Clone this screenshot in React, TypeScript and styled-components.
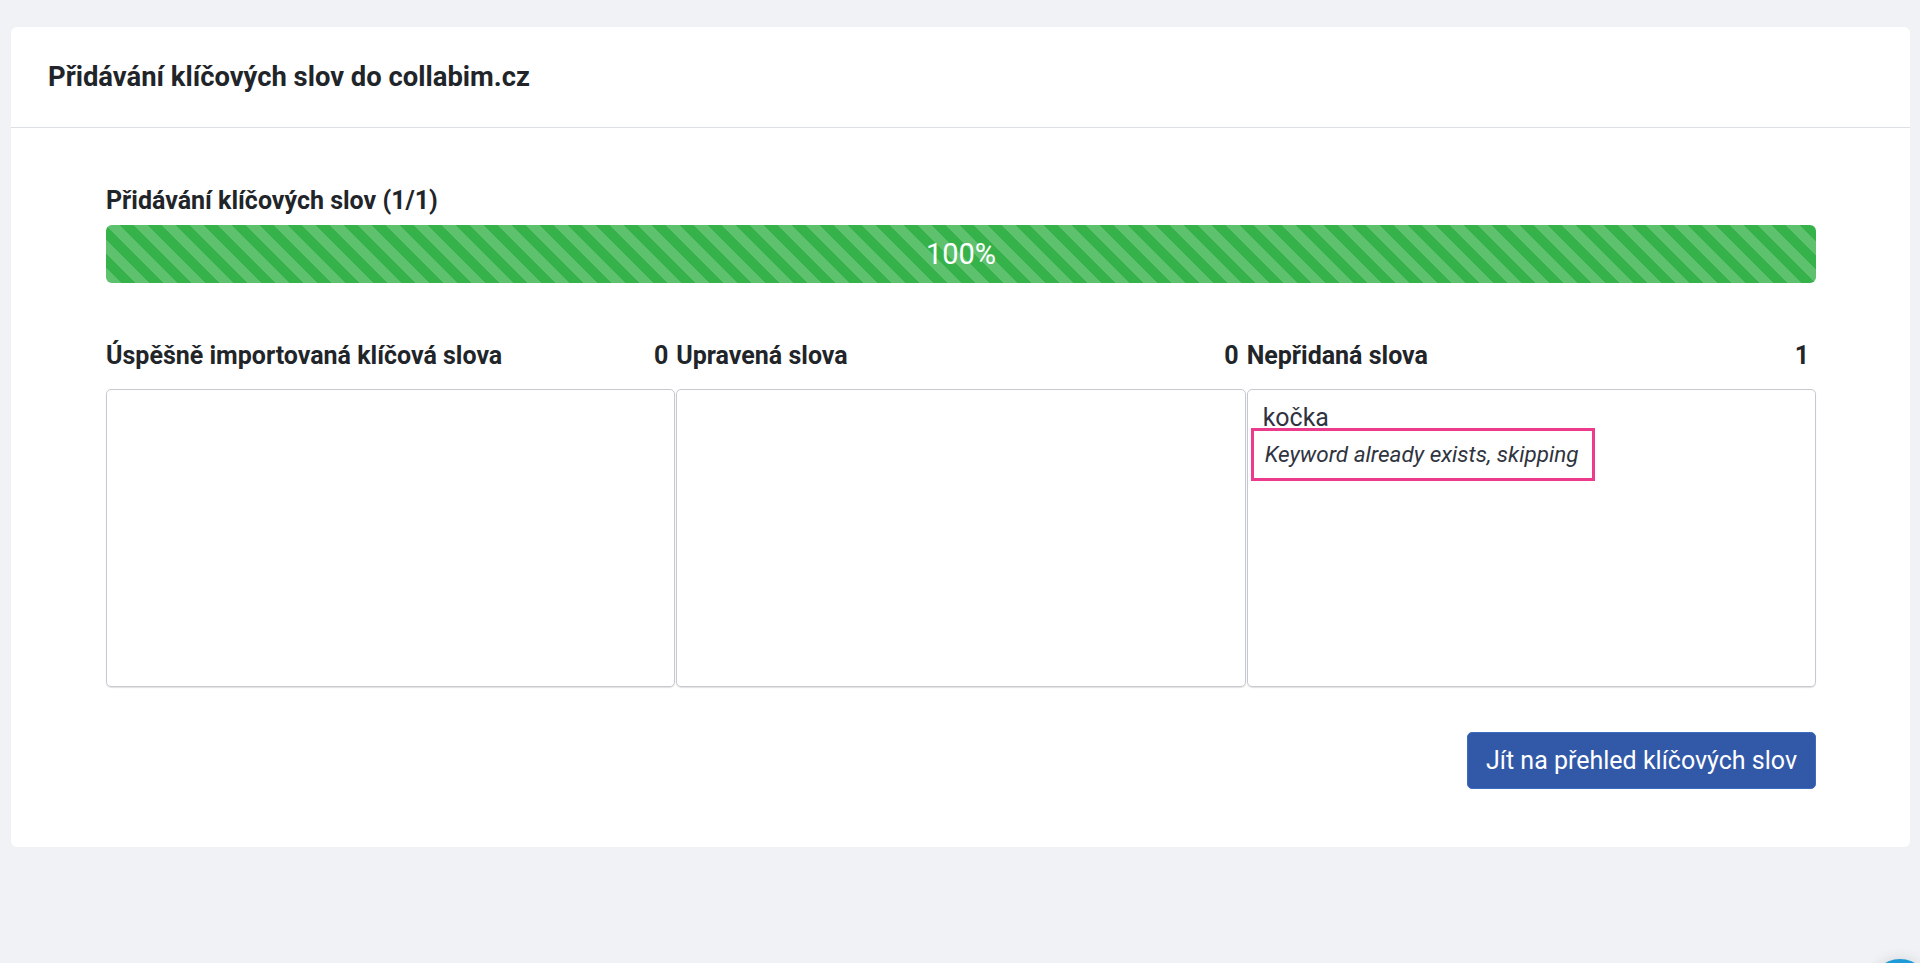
import React from "react";
import styled, { createGlobalStyle } from "styled-components";

const GlobalStyle = createGlobalStyle`
  html, body {
    margin: 0;
    padding: 0;
    background: #f0f2f6;
    font-family: Roboto, "Liberation Sans", Arial, sans-serif;
    color: #212529;
  }
  * { box-sizing: border-box; }
`;

const Page = styled.div`
  padding: 27px 10px 0 11px;
  min-height: 963px;
`;

const Card = styled.section`
  background: #ffffff;
  border-radius: 6px;
`;

const CardHeader = styled.header`
  height: 101px;
  display: flex;
  align-items: center;
  padding-left: 37px;
  border-bottom: 1px solid #dcdfe3;
`;

const Title = styled.h1`
  margin: 0;
  font-size: 27.4px;
  font-weight: 700;
  color: #212529;
`;

const CardBody = styled.div`
  padding: 58px 94px 58px 95px;
  display: flex;
  flex-direction: column;
`;

const ProgressLabel = styled.div`
  font-size: 25px;
  line-height: 30px;
  font-weight: 700;
  margin-bottom: 9px;
`;

const ProgressTrack = styled.div`
  height: 58px;
  border-radius: 6px;
  overflow: hidden;
  background: #e9ecef;
`;

const ProgressFill = styled.div`
  height: 100%;
  display: flex;
  align-items: center;
  justify-content: center;
  color: #ffffff;
  font-size: 29px;
  background-color: #36b24a;
  background-image: linear-gradient(
    45deg,
    rgba(255, 255, 255, 0.2) 25%,
    transparent 25%,
    transparent 50%,
    rgba(255, 255, 255, 0.2) 50%,
    rgba(255, 255, 255, 0.2) 75%,
    transparent 75%,
    transparent
  );
  background-size: 28px 28px;
`;

const Columns = styled.div`
  display: grid;
  grid-template-columns: repeat(3, 1fr);
  column-gap: 1px;
  margin-top: 58px;
`;

const Column = styled.div`
  display: flex;
  flex-direction: column;
  gap: 18px;
`;

const ColumnHead = styled.div`
  display: flex;
  justify-content: space-between;
  align-items: center;
  padding-right: 7px;
  font-size: 25px;
  line-height: 30px;
  font-weight: 700;
`;

const ListBox = styled.div`
  height: 298px;
  border: 1px solid #c6cacf;
  border-radius: 5px;
  box-shadow: 0 1px 1px rgba(0, 0, 0, 0.12);
  padding: 13px 15px;
  display: flex;
  flex-direction: column;
  align-items: flex-start;
`;

const Keyword = styled.div`
  font-size: 25px;
  line-height: 30px;
  color: #2f3440;
`;

const Reason = styled.div`
  margin: -5px 0 0 -12px;
  padding: 10px 13px 10px 11px;
  border: 3px solid #ec3b8d;
  font-size: 22.5px;
  line-height: 27px;
  font-style: italic;
  color: #2f3440;
`;

const Actions = styled.div`
  display: flex;
  justify-content: flex-end;
  margin-top: 45px;
`;

const PrimaryButton = styled.button`
  height: 57px;
  padding: 0 18px;
  border: 1px solid #3d6bc0;
  border-radius: 5px;
  background: #3259a8;
  color: #ffffff;
  font-family: Roboto, "Liberation Sans", Arial, sans-serif;
  font-size: 25px;
  cursor: pointer;
`;

const ChatBubble = styled.div`
  position: fixed;
  right: -10px;
  bottom: -56px;
  width: 60px;
  height: 60px;
  border-radius: 50%;
  background: #1e9bd7;
  box-shadow: 0 0 14px rgba(0, 0, 0, 0.12);
`;

type Col = { title: string; count: number; items: { word: string; reason?: string }[] };

const columns: Col[] = [
  { title: "Úspěšně importovaná klíčová slova", count: 0, items: [] },
  { title: "Upravená slova", count: 0, items: [] },
  {
    title: "Nepřidaná slova",
    count: 1,
    items: [{ word: "kočka", reason: "Keyword already exists, skipping" }],
  },
];

export default function App() {
  return (
    <>
      <GlobalStyle />
      <Page>
        <Card>
          <CardHeader>
            <Title>Přidávání klíčových slov do collabim.cz</Title>
          </CardHeader>
          <CardBody>
            <ProgressLabel>Přidávání klíčových slov (1/1)</ProgressLabel>
            <ProgressTrack>
              <ProgressFill style={{ width: "100%" }}>100%</ProgressFill>
            </ProgressTrack>
            <Columns>
              {columns.map((c) => (
                <Column key={c.title}>
                  <ColumnHead>
                    <span>{c.title}</span>
                    <span>{c.count}</span>
                  </ColumnHead>
                  <ListBox>
                    {c.items.map((it) => (
                      <React.Fragment key={it.word}>
                        <Keyword>{it.word}</Keyword>
                        {it.reason && <Reason>{it.reason}</Reason>}
                      </React.Fragment>
                    ))}
                  </ListBox>
                </Column>
              ))}
            </Columns>
            <Actions>
              <PrimaryButton>Jít na přehled klíčových slov</PrimaryButton>
            </Actions>
          </CardBody>
        </Card>
      </Page>
      <ChatBubble />
    </>
  );
}
